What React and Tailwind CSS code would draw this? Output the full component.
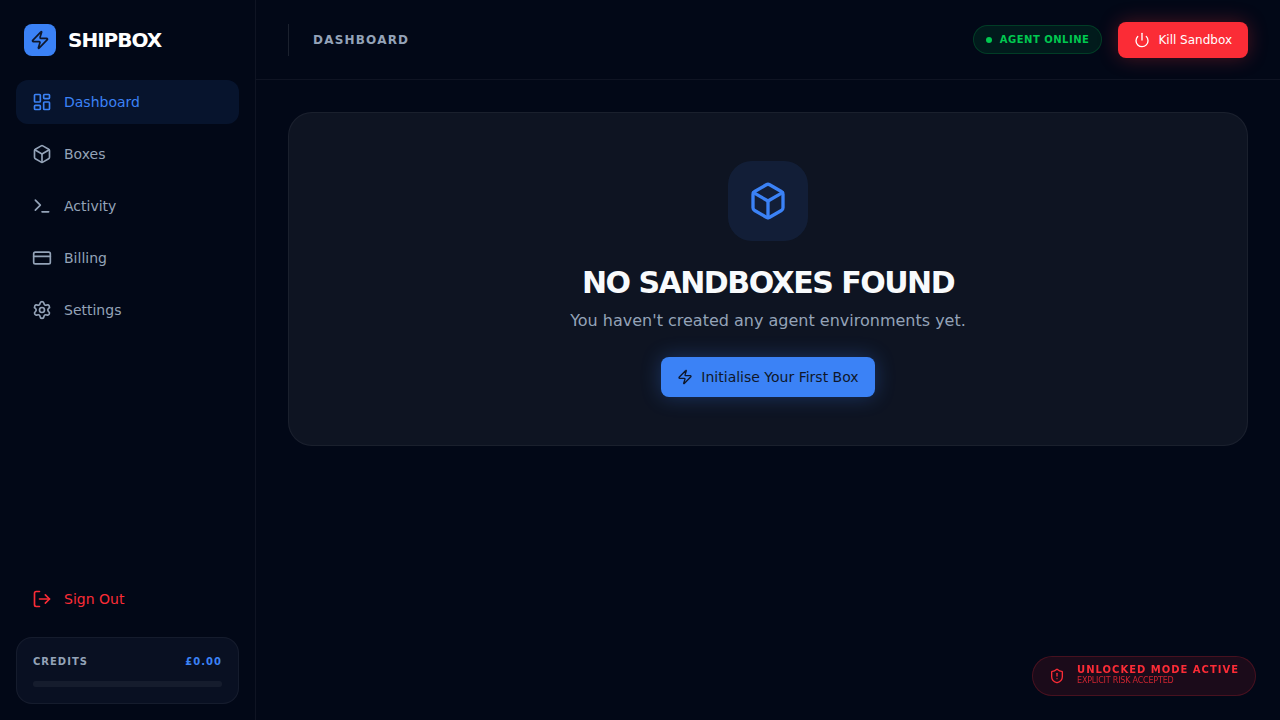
import { Box, CreditCard, LayoutDashboard, LogOut, Power, Settings, ShieldAlert, Terminal, Zap } from 'lucide-react';
import clsx from 'clsx';

const navItems = [
  { label: 'Dashboard', icon: LayoutDashboard, href: '#dashboard' },
  { label: 'Boxes', icon: Box, href: '#boxes' },
  { label: 'Activity', icon: Terminal, href: '#activity' },
  { label: 'Billing', icon: CreditCard, href: '#billing' },
  { label: 'Settings', icon: Settings, href: '#settings' },
];

function Sidebar({ active }) {
  return (
    <aside className="w-64 shrink-0 flex flex-col border-r border-white/5">
      <div className="p-6 flex items-center gap-3">
        <div className="w-8 h-8 rounded-lg bg-[#3b82f6] flex items-center justify-center">
          <Zap className="w-5 h-5 text-[#0f172a]" />
        </div>
        <span className="text-xl font-bold tracking-tighter text-white">SHIPBOX</span>
      </div>

      <nav className="flex-1 px-4 space-y-2">
        {navItems.map(({ label, icon: Icon, href }) => (
          <a
            key={label}
            href={href}
            className={clsx(
              'flex items-center gap-3 px-4 py-3 rounded-xl text-sm font-medium transition-colors',
              label === active ? 'bg-[#3b82f6]/10 text-[#3b82f6]' : 'text-[#94a3b8] hover:bg-white/5'
            )}
          >
            <Icon className="w-5 h-5" />
            {label}
          </a>
        ))}
      </nav>

      <div className="p-4 space-y-4">
        <button
          type="button"
          className="w-full flex items-center gap-3 px-4 py-3 rounded-xl text-sm font-medium text-[#fb2c36] hover:bg-[#fb2c36]/10"
        >
          <LogOut className="w-5 h-5" />
          Sign Out
        </button>
        <div className="p-4 rounded-2xl bg-[#0f1629]/60 border border-white/5">
          <div className="flex items-center justify-between mb-3 text-[10px] leading-[15px] font-bold tracking-widest">
            <span className="text-[#94a3b8]">CREDITS</span>
            <span className="text-[#3b82f6]">£0.00</span>
          </div>
          <div className="h-1.5 rounded-full bg-white/5" />
        </div>
      </div>
    </aside>
  );
}

function Header({ title }) {
  return (
    <header className="h-20 px-8 flex items-center justify-between border-b border-white/5">
      <div className="flex items-center gap-6">
        <div className="w-px h-8 bg-white/10" />
        <h1 className="text-xs font-bold tracking-widest text-[#94a3b8]">{title}</h1>
      </div>
      <div className="flex items-center gap-4">
        <div className="flex items-center gap-2 px-3 py-1.5 rounded-full border border-[#00c950]/20 bg-[#00c950]/10">
          <span className="w-1.5 h-1.5 rounded-full bg-[#00c950]" />
          <span className="text-[10px] leading-[15px] font-bold tracking-wider text-[#00c950]">AGENT ONLINE</span>
        </div>
        <button
          type="button"
          className="h-9 px-4 flex items-center gap-2 rounded-lg bg-[#fb2c36] text-xs font-medium text-white shadow-[0_0_20px_rgba(251,44,54,0.3)]"
        >
          <Power className="w-4 h-4" />
          Kill Sandbox
        </button>
      </div>
    </header>
  );
}

function EmptyState() {
  return (
    <section className="p-12 flex flex-col items-center rounded-3xl border border-white/5 bg-white/5 text-center">
      <div className="w-20 h-20 mb-6 rounded-3xl bg-[#3b82f6]/10 flex items-center justify-center">
        <Box className="w-10 h-10 text-[#3b82f6]" />
      </div>
      <h2 className="mb-2 text-3xl font-bold tracking-tighter text-[#f8fafc]">NO SANDBOXES FOUND</h2>
      <p className="mb-6 text-[#94a3b8]">You haven't created any agent environments yet.</p>
      <button
        type="button"
        className="h-10 px-4 flex items-center gap-2 rounded-lg bg-[#3b82f6] text-sm font-medium text-[#0f172a] shadow-[0_0_20px_rgba(59,130,246,0.3)]"
      >
        <Zap className="w-4 h-4" />
        Initialise Your First Box
      </button>
    </section>
  );
}

function RiskBadge() {
  return (
    <div className="fixed bottom-6 right-6 flex items-center gap-3 px-4 py-2 rounded-full border border-[#fb2c36]/20 bg-[#fb2c36]/10 text-[#fb2c36]">
      <ShieldAlert className="w-4 h-4" />
      <div className="flex flex-col">
        <span className="text-[10px] leading-[10px] font-bold tracking-widest">UNLOCKED MODE ACTIVE</span>
        <span className="text-[8px] leading-[12px] tracking-tight opacity-80">EXPLICIT RISK ACCEPTED</span>
      </div>
    </div>
  );
}

export default function App() {
  return (
    <div className="min-h-screen flex bg-[#020817] font-['DejaVu_Sans',sans-serif]">
      <Sidebar active="Dashboard" />
      <div className="flex-1 min-w-0 flex flex-col">
        <Header title="DASHBOARD" />
        <main className="p-8">
          <EmptyState />
        </main>
      </div>
      <RiskBadge />
    </div>
  );
}
